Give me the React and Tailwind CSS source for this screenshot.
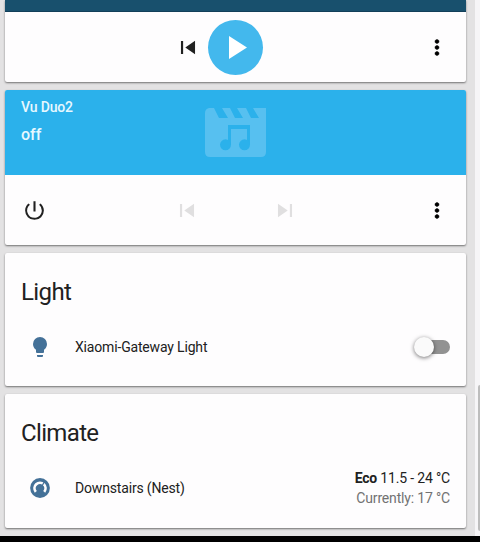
import React from "react";

function Icon({ d, className }) {
  return (
    <svg viewBox="0 0 24 24" fill="currentColor" className={className}>
      <path d={d} />
    </svg>
  );
}

const PREV = "M5.500 18V6h2v12H5.500m4-6L18.500 5.800v12.400z";
const NEXT = "M16.500 18h2V6h-2M5.500 18.200l9-6.200-9-6.200z";
const DOTS =
  "M12 8c1.100 0 2-.9 2-2s-.9-2-2-2-2 .9-2 2 .9 2 2 2zm0 2c-1.100 0-2 .9-2 2s.9 2 2 2 2-.9 2-2-.9-2-2-2zm0 6c-1.100 0-2 .9-2 2s.9 2 2 2 2-.9 2-2-.9-2-2-2z";
const POWER =
  "M13 3h-2v10h2V3zm4.830 2.170l-1.420 1.420A6.920 6.920 0 0 1 19 12c0 3.870-3.130 7-7 7A6.995 6.995 0 0 1 7.580 6.580L6.170 5.170A8.932 8.932 0 0 0 3 12a9 9 0 0 0 18 0c0-2.740-1.230-5.180-3.170-6.830z";
const BULB =
  "M12 2a7 7 0 0 0-7 7c0 2.380 1.190 4.470 3 5.740V17a1 1 0 0 0 1 1h6a1 1 0 0 0 1-1v-2.260c1.810-1.270 3-3.360 3-5.740a7 7 0 0 0-7-7M9 21a1 1 0 0 0 1 1h4a1 1 0 0 0 1-1v-1H9v1z";

const card = "rounded-[2px] bg-[#fefdfe] shadow-[0_1px_2px_rgba(0,0,0,0.5)]";

function MovieMusic() {
  return (
    <svg viewBox="0 0 61 49" className="h-[49px] w-[61px] text-[#57c0f0]">
      <path
        fill="currentColor"
        d="M4 0H9L14 10H23L17 0H25L30 10H38L32 0H41L46 10H54L48 0H61V44Q61 49 56 49H5Q0 49 0 44V5Q0 1 4 0Z"
      />
      <g className="fill-[#2bb1eb]">
        <path d="M23 17H45V37H42V21H26V37H23Z" />
        <circle cx="20.500" cy="36.800" r="5.500" />
        <circle cx="39.500" cy="36.800" r="5.500" />
      </g>
    </svg>
  );
}

function Thermostat() {
  return (
    <svg viewBox="0 0 20 20" className="h-5 w-5">
      <circle cx="10" cy="10" r="9.900" className="fill-[#447198]" />
      <path
        d="M5.800 13.800A5.500 5.500 0 1 1 14.200 13.800"
        fill="none"
        stroke="#fefdfe"
        strokeWidth="2.700"
      />
      <path d="M10.500 10.500L14.300 4" stroke="#447198" strokeWidth="1.300" />
      <circle cx="10.300" cy="10.600" r="3.300" className="fill-[#447198]" />
    </svg>
  );
}

export default function App() {
  return (
    <div className="flex h-[542px] w-[480px] flex-col overflow-hidden bg-black font-[Roboto,sans-serif] text-[#212121]">
      <div className="flex h-[536px] bg-[#e3e2e3]">
        <main className="flex w-[475px] flex-col gap-2 pr-[9px] pl-[5px]">
          <section className={`${card} h-[82px] shrink-0 rounded-t-none`}>
            <div className="h-3 border-b border-[#123f59] bg-[#18506d]" />
            <div className="flex h-[70px] items-center pr-[17px] pl-[170px]">
              <Icon d={PREV} className="h-[27px] w-[26px] shrink-0" />
              <button className="ml-[7px] flex h-[55px] w-[55px] items-center justify-center rounded-full bg-[#43b8ed] text-white">
                <svg viewBox="0 0 18 23" className="ml-[5px] h-[23px] w-[18px]">
                  <path fill="currentColor" d="M0 0L18 11.500L0 23Z" />
                </svg>
              </button>
              <Icon d={DOTS} className="ml-auto h-[27px] w-[24px] stroke-black stroke-[0.5] text-black" />
            </div>
          </section>

          <section className={`${card} h-[155px] shrink-0 overflow-hidden`}>
            <div className="grid h-[85px] grid-cols-[184px_61px_1fr] items-center gap-x-4 bg-[#2bb1eb]">
              <div className="self-start pt-[7px] pl-4 font-medium text-[#e7f8ff]">
                <div className="text-[14px] leading-5 tracking-[-0.15px]">Vu Duo2</div>
                <div className="mt-[6px] text-[16px] leading-6">off</div>
              </div>
              <MovieMusic />
            </div>
            <div className="flex h-[70px] items-center pr-[17px] pl-[17px]">
              <Icon d={POWER} className="h-[25px] w-[25px]" />
              <Icon d={PREV} className="ml-[127px] h-[27px] w-[26px] text-[#e0dfe0]" />
              <Icon d={NEXT} className="ml-[72px] h-[27px] w-[26px] text-[#e0dfe0]" />
              <Icon d={DOTS} className="ml-auto h-[27px] w-[24px] stroke-black stroke-[0.5] text-black" />
            </div>
          </section>

          <section className={`${card} h-[133px] shrink-0 px-4 pt-[19px]`}>
            <h2 className="text-[24px] leading-10 tracking-[-0.6px]">Light</h2>
            <div className="mt-[15px] flex h-10 items-center">
              <Icon d={BULB} className="ml-[7px] h-6 w-6 text-[#447198]" />
              <span className="ml-[23px] text-[14px] tracking-[-0.17px]">Xiaomi-Gateway Light</span>
              <div className="ml-auto flex h-[14px] w-[35px] items-center rounded-full bg-[#929292]">
                <div className="-ml-px h-5 w-5 shrink-0 rounded-full bg-[#fafafa] shadow-[0_1px_4px_rgba(0,0,0,0.55)]" />
              </div>
            </div>
          </section>

          <section className={`${card} h-[134px] shrink-0 px-4 pt-[19px]`}>
            <h2 className="text-[24px] leading-10 tracking-[-0.65px]">Climate</h2>
            <div className="mt-[15px] flex h-10 items-center">
              <div className="ml-[9px]">
                <Thermostat />
              </div>
              <span className="ml-[25px] text-[14px] tracking-[-0.17px]">Downstairs (Nest)</span>
              <div className="ml-auto text-right text-[14px] leading-5 tracking-[-0.17px]">
                <div>
                  <b>Eco</b> 11.5 - 24 °C
                </div>
                <div className="text-[#727272]">Currently: 17 °C</div>
              </div>
            </div>
          </section>
        </main>
        <div className="flex w-[5px] justify-end bg-[#f6f5f7] pt-[385px]">
          <div className="h-[146px] w-[2px] rounded-l-full bg-[#bdbdbd]" />
        </div>
      </div>
    </div>
  );
}
